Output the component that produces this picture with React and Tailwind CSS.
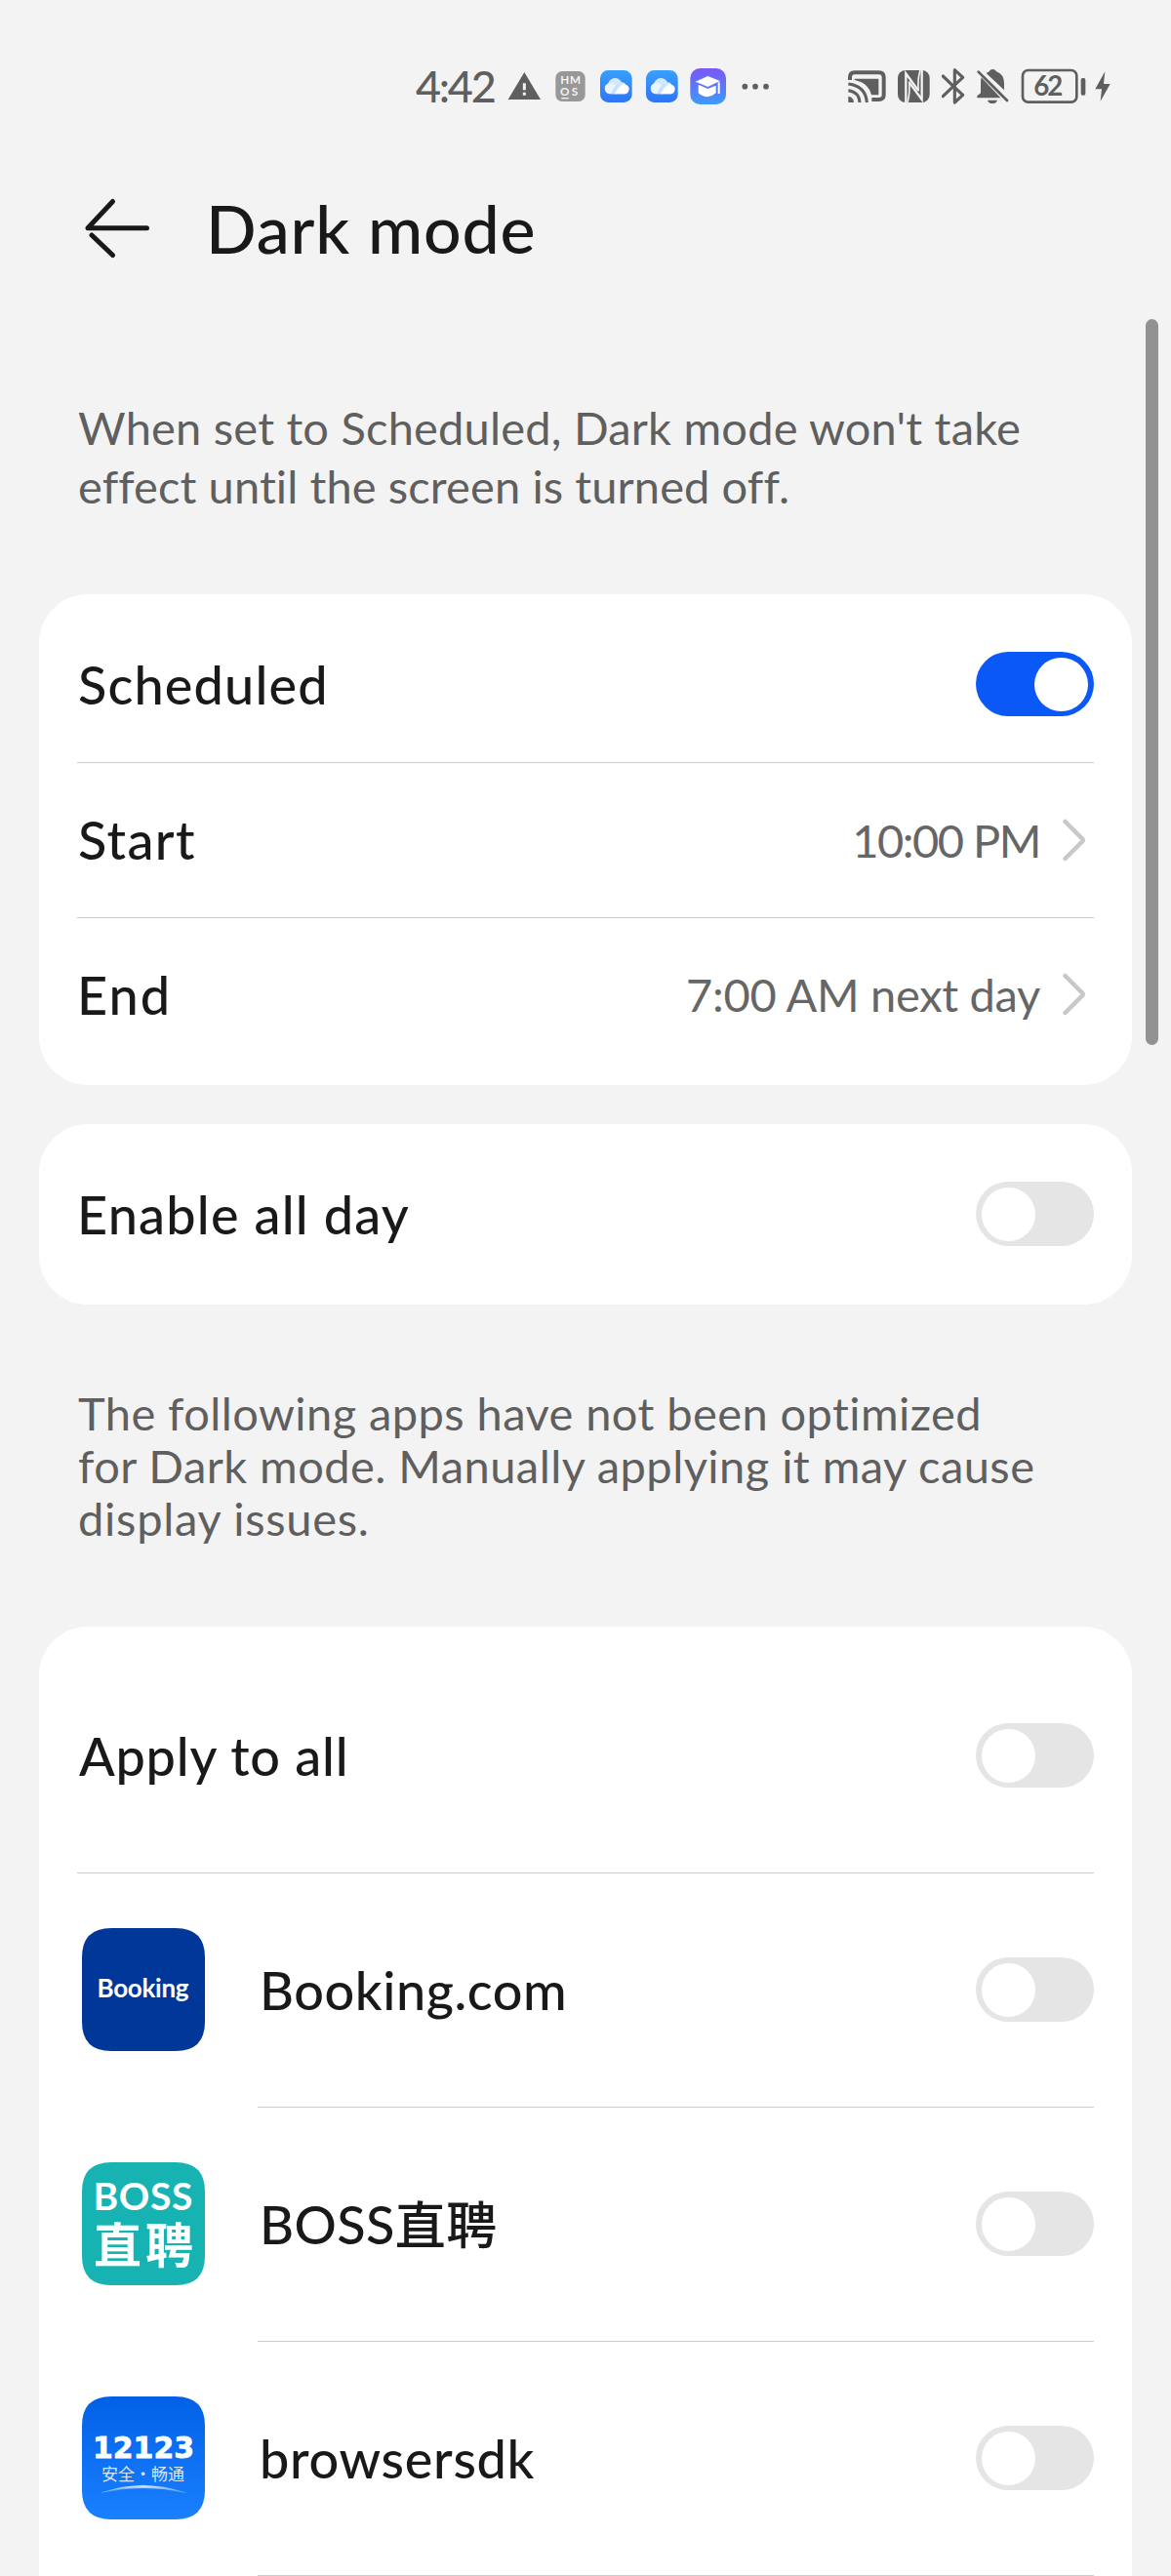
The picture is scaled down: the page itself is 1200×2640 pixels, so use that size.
import React from "react";

const GREY = "#5f5f5f";

function StatusBar() {
  return (
    <div className="mt-[68px] ml-[426px] flex h-10 items-center">
      <div className="w-[94px] text-[45px] leading-[54px] font-medium tracking-[-2.3px] whitespace-nowrap text-[#5f5f5f]">4:42</div>
      {/* warning */}
      <svg className="h-10 w-[34px] shrink-0" viewBox="360 54 102 120">
        <path d="M412 72 L462 156 H362 Z" fill={GREY} />
        <path d="M412 106 V127 M412 134 V143" stroke="#f3f3f3" strokeWidth="9" />
      </svg>
      {/* HMOS */}
      <svg className="ml-[15px] h-10 w-[31px] shrink-0" viewBox="507 54 93 120">
        <rect x="508" y="69" width="91" height="93" rx="20" fill="#989898" />
        <g fill="#f3f3f3" fontFamily="Lato, sans-serif" fontWeight="700" fontSize="35">
          <text x="523" y="108">H</text>
          <text x="552" y="108">M</text>
          <text x="522" y="145">O</text>
          <text x="557" y="145">S</text>
        </g>
        <path d="M526 152 H548" stroke="#f3f3f3" strokeWidth="4" />
      </svg>
      <CloudIcon className="ml-[14px] h-10 w-[34px] shrink-0" />
      <CloudIcon className="ml-[13px] h-10 w-[34px] shrink-0" />
      {/* education */}
      <svg className="ml-3 h-10 w-[37px] shrink-0" viewBox="921 54 111 120">
        <defs>
          <linearGradient id="edu" x1="0" y1="0" x2="0" y2="1">
            <stop offset="0" stopColor="#7a58f5" />
            <stop offset="0.5" stopColor="#5b77f8" />
            <stop offset="1" stopColor="#3d9bfb" />
          </linearGradient>
        </defs>
        <rect x="922" y="60" width="110" height="111" rx="30" fill="url(#edu)" />
        <path d="M947 110 L976 123 L1001 113 V136 Q989 147 975 148 Q959 147 947 136 Z" fill="#fff" />
        <path d="M976 83 L1016 99 L976 118 L936 101 Z" fill="#fff" stroke="#6872f6" strokeWidth="2" />
        <path d="M1010 103 V138" stroke="#fff" strokeWidth="6" />
      </svg>
      <svg className="ml-4 h-10 w-7 shrink-0" viewBox="1080 54 84 120" fill={GREY}>
        <circle cx="1090" cy="116" r="8.5" />
        <circle cx="1122" cy="116" r="8.5" />
        <circle cx="1155" cy="116" r="8.5" />
      </svg>
      {/* cast */}
      <svg className="ml-20 h-10 w-10 shrink-0" viewBox="84 54 120 120">
        <path d="M93 96 V88 Q93 73 107 73 H182 Q197 73 197 88 V142 Q197 156 182 156 H160" fill="none" stroke={GREY} strokeWidth="12" />
        <path d="M107 92 H181 V142 H159 Q150 105 107 96 Z" fill={GREY} />
        <path d="M88 146 Q104 148 105 165 H88 Z" fill={GREY} />
        <path d="M88 128 Q121 132 123 165 M88 108 Q142 115 145 165" fill="none" stroke={GREY} strokeWidth="9" />
      </svg>
      {/* NFC */}
      <svg className="ml-3 h-10 w-[33px] shrink-0" viewBox="240 54 99 120">
        <rect x="240" y="66" width="98" height="99" rx="24" fill={GREY} />
        <path d="M265 165 V76 L303 128 M275 103 L314 156 V66" fill="none" stroke="#f3f3f3" strokeWidth="7" />
        <path d="M275 100 Q278 135 270 165 M304 130 Q300 95 309 66" fill="none" stroke="#f3f3f3" strokeWidth="5" />
      </svg>
      {/* bluetooth */}
      <svg className="ml-3 h-10 w-6 shrink-0" viewBox="375 54 72 120">
        <path d="M379 84 L411 115 L440 142 L415 165 V65 L440 88 L411 115 L379 146" fill="none" stroke={GREY} strokeWidth="9.5" strokeLinejoin="round" strokeLinecap="round" />
      </svg>
      {/* muted bell */}
      <svg className="ml-[11px] h-10 w-[34px] shrink-0" viewBox="480 54 102 120">
        <path d="M497 88 L556 151 H484 V145 L495 136 V105 Q495 95 497 88 Z" fill={GREY} />
        <path d="M512 75 L521 70 Q524 63 532 63 Q540 63 543 70 Q566 78 567 105 V127 Z" fill={GREY} />
        <path d="M516 158 H546 Q543 168 531 168 Q519 168 516 158 Z" fill={GREY} />
        <path d="M488 71 L576 159" stroke={GREY} strokeWidth="8" strokeLinecap="round" />
      </svg>
      {/* battery */}
      <svg className="ml-3 h-10 w-[68px] shrink-0" viewBox="618 54 204 120">
        <rect x="624" y="66" width="166" height="98" rx="17" fill="none" stroke={GREY} strokeWidth="8" />
        <rect x="803" y="90" width="14" height="53" rx="5" fill={GREY} />
        <text x="658" y="143" fill={GREY} fontFamily="Lato, sans-serif" fontWeight="700" fontSize="83" letterSpacing="-6">62</text>
      </svg>
      {/* charging */}
      <svg className="ml-2 h-10 w-4 shrink-0" viewBox="846 54 48 120">
        <path d="M877 70 L847 124 H867 L863 161 L893 108 H873 Z" fill={GREY} />
      </svg>
    </div>
  );
}

function CloudIcon({ className }) {
  return (
    <svg className={className} viewBox="642 54 102 120">
      <defs>
        <linearGradient id="sky" x1="0" y1="0" x2="0" y2="1">
          <stop offset="0" stopColor="#38a0fb" />
          <stop offset="1" stopColor="#2f74f6" />
        </linearGradient>
        <linearGradient id="puff" x1="0" y1="0" x2="1" y2="0.4">
          <stop offset="0" stopColor="#a9d2fd" />
          <stop offset="1" stopColor="#f4faff" />
        </linearGradient>
      </defs>
      <rect x="645" y="66" width="98" height="99" rx="25" fill="url(#sky)" />
      <circle cx="691" cy="112" r="22" fill="#d5e9fe" />
      <path d="M674 139 A17 17 0 0 1 671 106 Q684 102 692 112 L696 139 Z" fill="#eaf4ff" />
      <path d="M679 139 Q688 112 705 105 A15 15 0 0 1 724 110 A15 15 0 0 1 717 139 Z" fill="url(#puff)" />
      <path d="M690 139 Q700 118 716 109 A15 15 0 0 1 717 139 Z" fill="#fff" />
    </svg>
  );
}

function Toggle({ on = false }) {
  return (
    <div className={on ? "flex h-[66px] w-[121px] shrink-0 items-center justify-end rounded-full bg-[#0a59f7] px-[6px]" : "flex h-[66px] w-[121px] shrink-0 items-center rounded-full bg-[#e5e5e5] px-[6px]"}>
      <div className="size-[55px] rounded-full bg-white" />
    </div>
  );
}

function Chevron() {
  return (
    <svg className="mr-[7px] ml-[21px] h-[46px] w-[27px] shrink-0" viewBox="0 0 27 46" fill="none">
      <path d="M4.5 4 L22 21.5 Q23.5 23 22 24.5 L4.5 42" stroke="#c8c8c8" strokeWidth="4.500" strokeLinecap="round" />
    </svg>
  );
}

function Label({ className, children }) {
  return <div className={`text-[54px] leading-[64px] font-medium whitespace-nowrap text-[#191919] ${className}`}>{children}</div>;
}

function Value({ className, children }) {
  return <div className={`ml-auto text-[47px] leading-[56px] whitespace-nowrap text-[#666666] ${className}`}>{children}</div>;
}

function BookingIcon() {
  return (
    <svg className="size-[126px]" viewBox="0 0 126 126">
      <path d="M30 0 H96 Q126 0 126 30 V96 Q126 126 96 126 H30 Q0 126 0 96 V30 Q0 0 30 0 Z" fill="#003799" />
      <text x="15.5" y="70.500" fill="#fff" fontFamily="Lato, sans-serif" fontWeight="700" fontSize="26" textLength="94">Booking</text>
    </svg>
  );
}

function BossIcon() {
  return (
    <svg className="size-[126px]" viewBox="0 0 126 126">
      <path d="M30 0 H96 Q126 0 126 30 V96 Q126 126 96 126 H30 Q0 126 0 96 V30 Q0 0 30 0 Z" fill="#17b3b3" />
      <text x="11.5" y="49" fill="#fff" fontFamily="Lato, sans-serif" fontWeight="700" fontSize="39" textLength="102">BOSS</text>
      <text x="12" y="103" fill="#fff" fontFamily='"Noto Sans CJK SC", sans-serif' fontWeight="700" fontSize="49" letterSpacing="4">直聘</text>
    </svg>
  );
}

function TrafficIcon() {
  return (
    <svg className="size-[126px]" viewBox="0 0 126 126">
      <defs>
        <linearGradient id="traffic" x1="0" y1="0" x2="0" y2="1">
          <stop offset="0" stopColor="#0260e6" />
          <stop offset="1" stopColor="#1980ff" />
        </linearGradient>
        <linearGradient id="arc" x1="0" y1="0" x2="1" y2="0">
          <stop offset="0" stopColor="#fff" stopOpacity="0.2" />
          <stop offset="0.5" stopColor="#fff" stopOpacity="0.8" />
          <stop offset="1" stopColor="#fff" stopOpacity="0.2" />
        </linearGradient>
      </defs>
      <path d="M30 0 H96 Q126 0 126 30 V96 Q126 126 96 126 H30 Q0 126 0 96 V30 Q0 0 30 0 Z" fill="url(#traffic)" />
      <text x="11" y="63" fill="#fff" stroke="#fff" strokeWidth="0.8" fontFamily='"DejaVu Sans", sans-serif' fontWeight="700" fontSize="31" textLength="104" lengthAdjust="spacingAndGlyphs">12123</text>
      <text x="20" y="86" fill="#fff" fillOpacity="0.85" fontFamily='"Noto Sans CJK SC", sans-serif' fontWeight="400" fontSize="17" textLength="85">安全·畅通</text>
      <path d="M20 98.500 Q62 84 106 98.500 Q62 88.500 20 98.500 Z" fill="url(#arc)" stroke="url(#arc)" strokeWidth="0.6" />
    </svg>
  );
}

function AppRow({ icon, label }) {
  return (
    <div className="flex h-[240px]">
      <div className="flex w-[185px] shrink-0 items-center pb-[2px] pl-[5px]">{icon}</div>
      <div className="flex grow items-center justify-between border-b border-[#cccccc] pb-px">
        {label}
        <Toggle />
      </div>
    </div>
  );
}

export default function App() {
  return (
    <div className="relative flex h-[2640px] w-[1200px] flex-col overflow-hidden bg-[#f3f3f3] [font-family:Lato,'Noto_Sans_CJK_SC',sans-serif]">
      <StatusBar />

      <header className="mt-[86px] flex h-20 items-center pl-[84px]">
        <svg className="h-[68px] w-[72px]" viewBox="84 200 72 68" fill="none" stroke="#191919" strokeWidth="5" strokeLinecap="round">
          <path d="M150.500 233.800 H90 L115.500 206.500" strokeLinejoin="round" />
          <path d="M94 241 L115.500 261.500" />
        </svg>
        <h1 className="ml-[55px] text-[68px] leading-[80px] font-medium tracking-[0.81px] whitespace-nowrap text-[#191919]">Dark mode</h1>
      </header>

      <p className="mt-[134px] ml-20 text-[47px] leading-[60px] whitespace-nowrap text-[#5f5f5f]">
        <span className="block tracking-[0.2px]">When set to Scheduled, Dark mode won't take</span>
        <span className="block tracking-[0.1px]">effect until the screen is turned off.</span>
      </p>

      <section className="mx-10 mt-[81px] h-[503px] shrink-0 rounded-[50px] bg-white px-[39px] py-3">
        <div className="flex h-[161px] items-center justify-between border-b border-[#cccccc]">
          <Label className="pt-[2px] pl-px tracking-[1.17px]">Scheduled</Label>
          <Toggle on />
        </div>
        <div className="flex h-[159px] items-center border-b border-[#cccccc] pb-px">
          <Label className="pt-px pl-px tracking-[1.38px]">Start</Label>
          <Value className="tracking-[-1.48px]">10:00 PM</Value>
          <Chevron />
        </div>
        <div className="flex h-[159px] items-center pb-[3px]">
          <Label className="pt-px tracking-[2px]">End</Label>
          <Value className="tracking-[-0.31px]">7:00 AM next day</Value>
          <Chevron />
        </div>
      </section>

      <section className="mx-10 mt-10 flex h-[185px] shrink-0 items-center justify-between rounded-[50px] bg-white px-[39px] pb-px">
        <Label className="pt-[2px] tracking-[1.2px]">Enable all day</Label>
        <Toggle />
      </section>

      <p className="mt-[84px] ml-20 text-[47px] leading-[54px] whitespace-nowrap text-[#5f5f5f]">
        <span className="block tracking-[0.42px]">The following apps have not been optimized</span>
        <span className="block tracking-[0.45px]">for Dark mode. Manually applying it may cause</span>
        <span className="block tracking-[0.73px]">display issues.</span>
      </p>

      <section className="mx-10 mt-[84px] h-[1040px] shrink-0 rounded-t-[50px] bg-white px-[39px] pt-3">
        <div className="flex h-[241px] items-center justify-between border-b border-[#cccccc]">
          <Label className="pt-[2px] pl-[2px] tracking-[0.76px]">Apply to all</Label>
          <Toggle />
        </div>
        <AppRow icon={<BookingIcon />} label={<Label className="pt-px pl-[2px] tracking-[0.57px]">Booking.com</Label>} />
        <AppRow
          icon={<BossIcon />}
          label={
            <Label className="pt-px pl-[2px] tracking-[0.41px]">
              BOSS<span className="[font-family:'Noto_Sans_CJK_SC',sans-serif] text-[52px] leading-none">直聘</span>
            </Label>
          }
        />
        <AppRow icon={<TrafficIcon />} label={<Label className="pt-px pl-[2px] tracking-[0.7px]">browsersdk</Label>} />
      </section>

      {/* scroll indicator */}
      <div className="absolute top-[327px] right-[13px] h-[744px] w-[13px] rounded-full bg-[#929292]" />
    </div>
  );
}
